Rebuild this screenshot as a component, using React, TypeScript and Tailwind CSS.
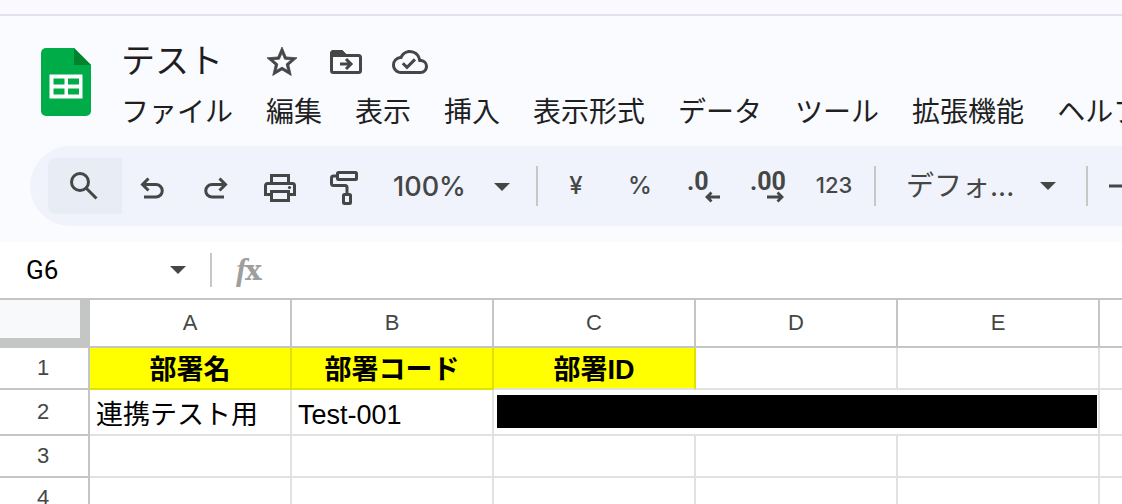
import React from 'react';
import { MdOutlineCloudDone } from 'react-icons/md';

const menus = ['ファイル', '編集', '表示', '挿入', '表示形式', 'データ', 'ツール', '拡張機能', 'ヘルプ'];
const columns = ['A', 'B', 'C', 'D', 'E', 'F'];

const SheetsLogo = () => (
  <svg width="50" height="68" viewBox="0 0 50 68">
    <path d="M5 0h28l17 17v46a5 5 0 0 1-5 5H5a5 5 0 0 1-5-5V5a5 5 0 0 1 5-5z" fill="#00ac47" />
    <path d="M33 0l17 17H33z" fill="#00832d" />
    <path
      d="M8.500 26.500h33v24h-33zM12.500 30.500v6h11v-6zM27 30.500v6h11v-6zM12.500 40.500v6h11v-6zM27 40.500v6h11v-6z"
      fill="#fff"
      fillRule="evenodd"
    />
  </svg>
);

const StarIcon = () => (
  <svg width="36" height="36" viewBox="0 0 24 24" fill="currentColor" stroke="currentColor" strokeWidth="0.500">
    <path d="M22 9.240l-7.190-.620L12 2 9.190 8.630 2 9.240l5.460 4.730L5.820 21 12 17.270 18.180 21l-1.630-7.030L22 9.240zM12 15.400l-3.760 2.270 1-4.280-3.320-2.880 4.380-.380L12 6.100l1.710 4.040 4.380.380-3.320 2.880 1 4.280L12 15.400z" />
  </svg>
);

const MoveIcon = () => (
  <svg width="32" height="24" viewBox="0 0 32 24" fill="none" stroke="currentColor" strokeWidth="3">
    <path d="M1.500 6V3.500a2 2 0 0 1 2-2h8l4 4h13a2 2 0 0 1 2 2v13a2 2 0 0 1-2 2h-25a2 2 0 0 1-2-2z" />
    <path d="M1.500 3.500a2 2 0 0 1 2-2h8l4 4h-14z" fill="currentColor" />
    <path d="M10 14h10M16 9l5 5-5 5" />
  </svg>
);

const SearchIcon = () => (
  <svg width="28" height="28" viewBox="0 0 28 28" fill="none" stroke="currentColor" strokeWidth="3">
    <circle cx="10" cy="10" r="8.500" />
    <path d="M16 16l10.500 10.500" />
  </svg>
);

const UndoIcon = ({ className = '' }: { className?: string }) => (
  <svg width="24" height="24" viewBox="0 0 24 24" fill="none" stroke="currentColor" strokeWidth="3" className={className}>
    <path d="M8.500 2.500L2.500 8.500l6 6M2.500 8.500h13.500a6.200 6.200 0 0 1 0 12.500H4" />
  </svg>
);

const PrintIcon = () => (
  <svg width="32" height="28" viewBox="0 0 32 28" fill="none" stroke="currentColor" strokeWidth="3">
    <path d="M7.500 9V1.500h17V9" />
    <path d="M7.500 20.500h-6v-9a2 2 0 0 1 2-2h25a2 2 0 0 1 2 2v9h-6" />
    <path d="M7.500 17.500h17v9h-17z" />
    <circle cx="25.500" cy="13.500" r="1.600" fill="currentColor" stroke="none" />
  </svg>
);

const PaintIcon = () => (
  <svg width="28" height="34" viewBox="0 0 28 34" fill="none" stroke="currentColor" strokeWidth="3">
    <rect x="7.500" y="1.500" width="19" height="7" rx="1" />
    <path d="M7 5H3.500a2 2 0 0 0-2 2v5.500a2 2 0 0 0 2 2H15a2 2 0 0 1 2 2V22" />
    <rect x="13.500" y="23.500" width="7" height="9" rx="1" />
  </svg>
);

const DecreaseDecimalIcon = () => (
  <svg width="34" height="34" viewBox="0 0 34 34" className="overflow-visible">
    <text x="0" y="21" fontSize="25" fontWeight="700" fontFamily="Roboto, sans-serif" fill="currentColor">.0</text>
    <path d="M33 28H20M24.500 23.500L20 28l4.500 4.500" fill="none" stroke="currentColor" strokeWidth="2.800" />
  </svg>
);

const IncreaseDecimalIcon = () => (
  <svg width="36" height="34" viewBox="0 0 36 34" className="overflow-visible">
    <text x="0" y="21" fontSize="25" fontWeight="700" fontFamily="Roboto, sans-serif" fill="currentColor">.00</text>
    <path d="M17 28h14M27.500 23.500L32 28l-4.500 4.500" fill="none" stroke="currentColor" strokeWidth="2.800" />
  </svg>
);

const Caret = () => (
  <svg width="16" height="8" viewBox="0 0 16 8" className="shrink-0">
    <path d="M0 0h16L8 8z" fill="#444746" />
  </svg>
);

const Divider = () => <div className="h-10 w-0.5 shrink-0 bg-[#c7c7c7]" />;

const ToolButton = ({ label, children }: { label: string; children: React.ReactNode }) => (
  <button aria-label={label} className="flex h-14 w-16 shrink-0 items-center justify-center">
    {children}
  </button>
);

const Header = () => (
  <header className="flex pl-[41px] pt-5">
    <a href="#home" aria-label="スプレッドシート ホーム" className="mt-3 shrink-0">
      <SheetsLogo />
    </a>
    <div className="ml-[30px] min-w-0 flex-1">
      <div className="flex h-[52px] items-center text-[#444746]">
        <input
          aria-label="名前を変更"
          defaultValue="テスト"
          className="h-[52px] w-[143px] bg-transparent pb-2 text-[34px] text-[#1f1f1f] outline-none"
        />
        <button aria-label="スター"><StarIcon /></button>
        <button aria-label="移動" className="ml-[30px]"><MoveIcon /></button>
        <button aria-label="ドキュメントのステータスを表示" className="ml-[30px]"><MdOutlineCloudDone size={36} /></button>
      </div>
      <nav className="flex h-12 items-center gap-[33px] overflow-hidden whitespace-nowrap pt-0.5 text-[28px] text-[#1f1f1f]">
        {menus.map((menu) => (
          <button key={menu} className="shrink-0">{menu}</button>
        ))}
      </nav>
    </div>
  </header>
);

const Toolbar = () => (
  <div className="mb-4 ml-[30px] mt-2.5 flex h-20 items-center overflow-hidden rounded-l-full bg-[#f0f3fb] pl-[18px] font-[Inter,'Noto_Sans_CJK_JP',sans-serif] font-medium text-[#444746]">
    <button aria-label="メニュー" className="flex h-14 w-[74px] shrink-0 items-center justify-center rounded-l-lg bg-[#e8ecf4] pr-0.5">
      <SearchIcon />
    </button>
    <div className="-ml-0.5 flex shrink-0 pt-1">
      <ToolButton label="元に戻す"><UndoIcon /></ToolButton>
      <ToolButton label="やり直し"><UndoIcon className="-scale-x-100" /></ToolButton>
      <ToolButton label="印刷"><PrintIcon /></ToolButton>
      <ToolButton label="書式を貼り付け"><PaintIcon /></ToolButton>
    </div>
    <button className="mr-[26px] flex w-[134px] shrink-0 items-center justify-between pl-[17px] pt-0.5 text-[27px]">
      100%
      <Caret />
    </button>
    <Divider />
    <div className="mx-1.5 flex shrink-0 text-2xl">
      <ToolButton label="通貨の表示形式">¥</ToolButton>
      <ToolButton label="パーセント表示形式">%</ToolButton>
      <ToolButton label="小数点以下の桁数を減らす"><DecreaseDecimalIcon /></ToolButton>
      <ToolButton label="小数点以下の桁数を増やす"><IncreaseDecimalIcon /></ToolButton>
      <button className="w-[68px] shrink-0 text-center text-[22px]">123</button>
    </div>
    <Divider />
    <button className="mx-[30px] flex w-[150px] shrink-0 items-center justify-between text-[28px] font-normal">
      デフォ...
      <Caret />
    </button>
    <Divider />
    <button aria-label="フォントサイズを縮小" className="ml-5 shrink-0">
      <svg width="24" height="24" viewBox="0 0 24 24">
        <path d="M1 10.500h20v3H1z" fill="currentColor" />
      </svg>
    </button>
  </div>
);

const FormulaBar = () => (
  <div className="flex h-14 items-center bg-white font-[Roboto,sans-serif]">
    <input aria-label="名前ボックス" defaultValue="G6" className="ml-[26px] w-36 text-[26px] text-black outline-none" />
    <Caret />
    <div className="ml-6 h-[34px] w-0.5 bg-[#c7c7c7]" />
    <svg width="30" height="34" viewBox="0 0 30 34" className="ml-5 shrink-0 overflow-visible" fill="#9e9e9e">
      <text x="4" y="27" fontSize="32" fontStyle="italic" fontWeight="700" fontFamily="Liberation Serif, serif">
        f
        <tspan x="13" fontSize="28" fontStyle="normal" fontFamily="DejaVu Serif, serif">x</tspan>
      </text>
    </svg>
    <input aria-label="数式バー" className="ml-2 min-w-0 flex-1 outline-none" />
  </div>
);

const cell = 'border-b-2 border-r-2 border-[#e1e1e1] px-1.5 last:border-r-0';
const filled = 'border-b-2 border-r-2 border-[#e1e100] bg-[#ffff00] px-1.5 pt-1 text-center font-bold';
const rowHead = 'border-b-2 border-r-2 border-[#c4c5c5] pr-0.5 text-center text-[22px] font-normal text-[#444746]';

const EmptyCells = ({ count }: { count: number }) => (
  <>
    {Array.from({ length: count }, (_, i) => (
      <td key={i} className={cell} />
    ))}
  </>
);

const Sheet = () => (
  <main className="min-h-0 flex-1 overflow-hidden border-t-2 border-[#c4c5c5] bg-white">
    <table className="w-full min-w-[1122px] table-fixed border-separate border-spacing-0 text-[27px] leading-8 text-black">
      <colgroup>
        <col className="w-[90px]" />
        <col className="w-[202px]" />
        <col className="w-[202px]" />
        <col className="w-[202px]" />
        <col className="w-[202px]" />
        <col className="w-[202px]" />
        <col />
      </colgroup>
      <thead>
        <tr className="h-12">
          <td className="border-b-[10px] border-r-[10px] border-[#c4c5c5] bg-[#f8f9fb]" />
          {columns.map((name) => (
            <th
              key={name}
              scope="col"
              className="overflow-hidden border-b-2 border-r-2 border-[#c4c5c5] text-[22px] font-normal text-[#444746] last:border-r-0"
            >
              {name === 'F' ? '' : name}
            </th>
          ))}
        </tr>
      </thead>
      <tbody>
        <tr className="h-[42px]">
          <th scope="row" className={rowHead}>1</th>
          <td className={filled}>部署名</td>
          <td className={filled}>部署コード</td>
          <td className="border-b-2 border-r-2 border-b-[#e1e1e1] border-r-[#e1e100] bg-[#ffff00] px-1.5 pt-1 text-center font-bold">部署ID</td>
          <EmptyCells count={3} />
        </tr>
        <tr className="h-[46px]">
          <th scope="row" className={rowHead}>2</th>
          <td className={`${cell} whitespace-nowrap pt-1.5`}>連携テスト用</td>
          <td className={`${cell} whitespace-nowrap pt-1.5`}>Test-001</td>
          <td colSpan={3} className="border-b-2 border-r-2 border-[#e1e1e1] pb-1.5 pl-[3px] pr-px pt-[5px]">
            <div className="h-[33px] bg-black" />
          </td>
          <EmptyCells count={1} />
        </tr>
        <tr className="h-[42px]">
          <th scope="row" className={rowHead}>3</th>
          <EmptyCells count={6} />
        </tr>
        <tr className="h-[42px]">
          <th scope="row" className={rowHead}>4</th>
          <EmptyCells count={6} />
        </tr>
      </tbody>
    </table>
  </main>
);

export default function App() {
  return (
    <div className="flex h-screen flex-col overflow-hidden bg-[#f9fbff] font-['Liberation_Sans','Noto_Sans_CJK_JP',sans-serif]">
      <div className="h-4 shrink-0 border-b-2 border-[#e1e0ec] bg-[#faf9ff]" />
      <Header />
      <Toolbar />
      <FormulaBar />
      <Sheet />
    </div>
  );
}
